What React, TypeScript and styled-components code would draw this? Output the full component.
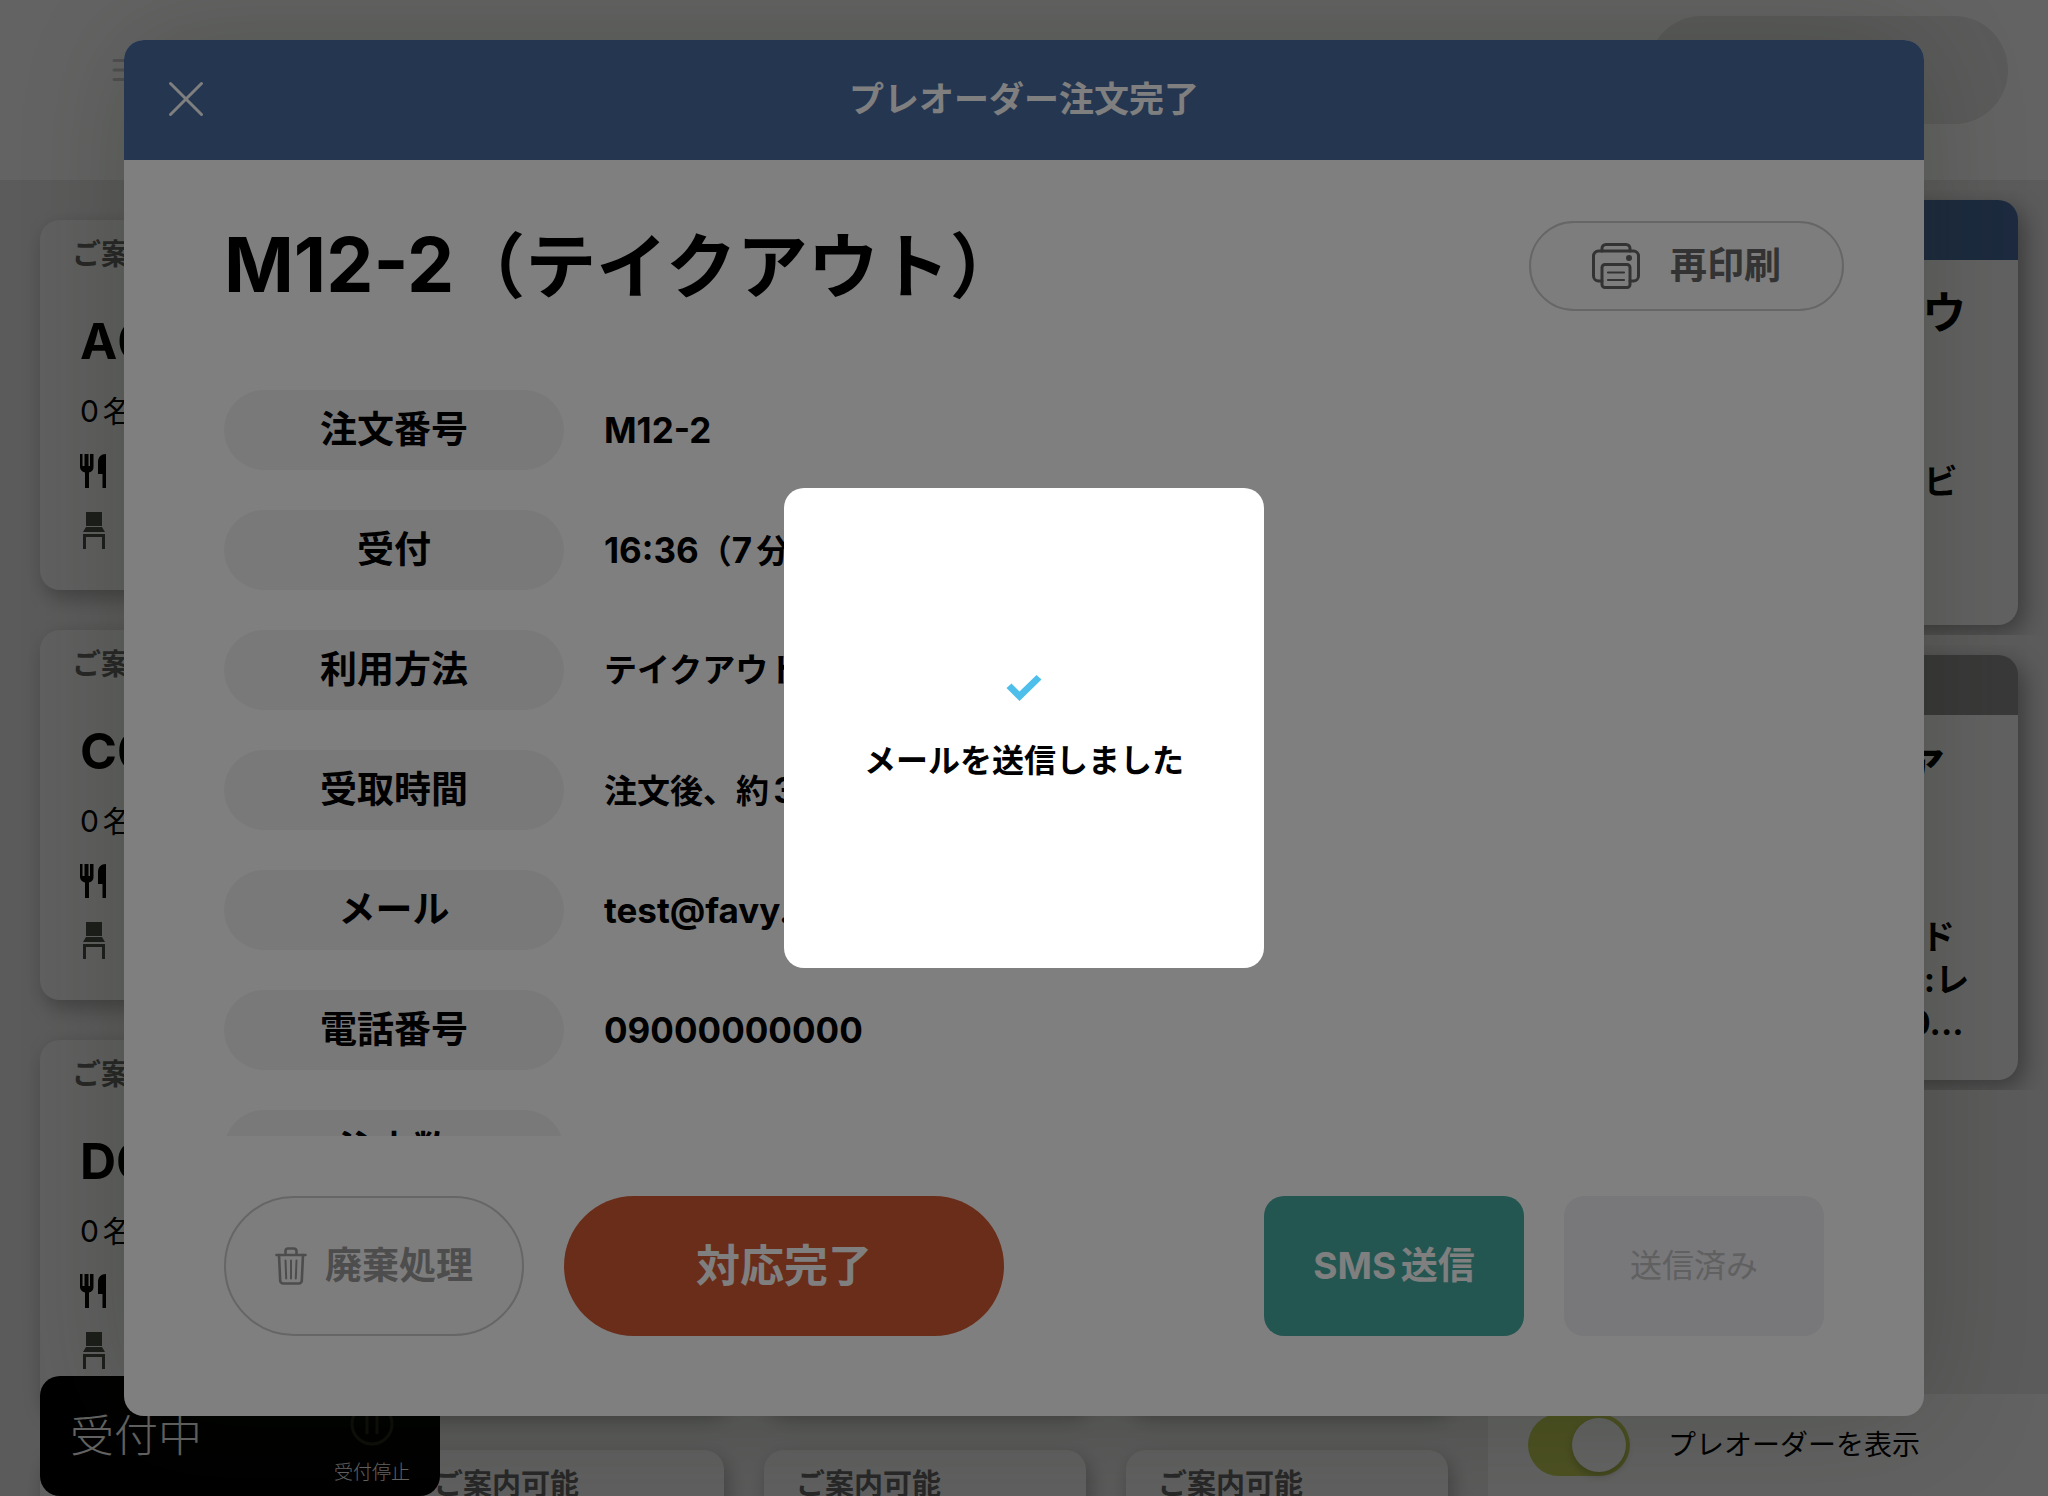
import React from "react";
import styled, { createGlobalStyle } from "styled-components";

const GlobalStyle = createGlobalStyle`
  *, *::before, *::after { box-sizing: border-box; }
  body {
    margin: 0;
    font-family: Inter, "Noto Sans CJK JP", sans-serif;
    line-height: 1.5;
    color: #000;
    text-autospace: normal;
  }
  button { font-family: inherit; line-height: inherit; padding: 0; border: 0; cursor: pointer; text-autospace: normal; }
  h1, h2, h3, p, ul, dl, dd { margin: 0; padding: 0; }
  ul { list-style: none; }
`;

const Screen = styled.div`
  position: relative;
  display: flex;
  flex-direction: column;
  height: 100vh;
  overflow: hidden;
  background: #ebebeb;
`;

const TopBar = styled.header`
  display: flex;
  flex: none;
  align-items: flex-start;
  justify-content: space-between;
  height: 180px;
  padding: 16px 40px;
  background: #fff;
`;

const MenuButton = styled.button`
  display: flex;
  align-items: center;
  height: 108px;
  padding-left: 72px;
  background: none;
  color: #ccc;
`;

const SearchPill = styled.button`
  width: 360px;
  height: 108px;
  border-radius: 54px;
  background: #e9e9e9;
`;

const Main = styled.main`
  display: flex;
  flex: 1;
  min-height: 0;
`;

const SeatGrid = styled.ul`
  display: grid;
  flex: 1;
  grid-template-columns: repeat(4, 1fr);
  grid-auto-rows: 370px;
  gap: 40px;
  padding: 40px;
  overflow: hidden;
`;

const SeatCard = styled.li`
  padding: 15px 32px;
  border-radius: 20px;
  background: #f7f7f7;
  box-shadow: 4px 8px 20px rgba(0, 0, 0, 0.28);
`;

const SeatStatus = styled.p`
  color: #666;
  font-size: 29px;
  font-weight: 700;
  line-height: 40px;
`;

const SeatBody = styled.div`
  display: flex;
  flex-direction: column;
  gap: 20px;
  padding: 36px 8px 0;
`;

const SeatName = styled.h3`
  font-size: 50px;
  font-weight: 700;
  line-height: 60px;
`;

const SeatLine = styled.div`
  display: flex;
  align-items: center;
  height: 40px;
  font-size: 30px;
`;

const Sidebar = styled.aside`
  display: flex;
  flex: none;
  flex-direction: column;
  width: 560px;
`;

const OrderList = styled.ul`
  display: flex;
  flex: 1;
  flex-direction: column;
  gap: 10px;
  min-height: 0;
  padding-top: 10px;
`;

const OrderCell = styled.li`
  padding: 10px 30px 10px 40px;
  overflow: hidden;
`;

const OrderCard = styled.article<{ $strip: string }>`
  height: 425px;
  padding: 25px 36px;
  border-top: 60px solid ${(p) => p.$strip};
  border-radius: 20px;
  background: #fbfbfb;
  box-shadow: 6px 8px 24px rgba(0, 0, 0, 0.36);
`;

const OrderName = styled.h3`
  height: 175px;
  padding-left: 4px;
  font-size: 44px;
  font-weight: 700;
  line-height: 56px;
  white-space: nowrap;
`;

const OrderItem = styled.p`
  font-size: 34px;
  font-weight: 700;
  line-height: 43px;
  white-space: nowrap;
`;

const SidebarFooter = styled.label`
  display: flex;
  flex: none;
  align-items: center;
  gap: 38px;
  height: 102px;
  padding: 0 40px;
  background: #fbfbfb;
  font-size: 28px;
`;

const Toggle = styled.input`
  display: flex;
  align-items: center;
  justify-content: flex-end;
  width: 102px;
  height: 62px;
  margin: 0;
  padding: 0 4px;
  border-radius: 31px;
  background: #c6d058;
  appearance: none;

  &::before {
    content: "";
    width: 54px;
    height: 54px;
    border-radius: 27px;
    background: #fff;
    box-shadow: 0 4px 8px rgba(0, 0, 0, 0.2);
  }
`;

const ReceptionBar = styled.section`
  position: absolute;
  bottom: 0;
  left: 40px;
  display: flex;
  align-items: center;
  justify-content: space-between;
  width: 400px;
  height: 120px;
  padding: 0 30px;
  border-radius: 20px;
  background: #000;
  color: #fff;
  font-size: 44px;
  font-weight: 300;
`;

const PauseButton = styled.button`
  display: flex;
  flex-direction: column;
  align-items: center;
  gap: 14px;
  padding-top: 16px;
  background: none;
  color: #fff;
  font-size: 19px;
  font-weight: 300;
  line-height: 26px;
`;

const Layer = styled.div<{ $shade: number }>`
  position: absolute;
  inset: 0;
  display: flex;
  align-items: center;
  justify-content: center;
  padding: 40px 124px 80px;
  background: rgba(0, 0, 0, ${(p) => p.$shade});
`;

const Dialog = styled.section`
  display: flex;
  flex: 1;
  flex-direction: column;
  align-self: stretch;
  overflow: hidden;
  border-radius: 20px;
  background: #fff;
  box-shadow: 0 0 120px rgba(36, 64, 20, 0.22);
`;

const DialogHeader = styled.header`
  display: grid;
  flex: none;
  grid-template-columns: 124px 1fr 124px;
  align-items: center;
  height: 120px;
  padding-bottom: 2px;
  background: #4a6ca2;
  color: #fff;
`;

const CloseButton = styled.button`
  display: flex;
  align-items: center;
  justify-content: center;
  height: 100%;
  background: none;
  color: #fff;
`;

const DialogTitle = styled.h1`
  font-size: 35px;
  font-weight: 600;
  text-align: center;
`;

const OrderHeading = styled.div`
  display: flex;
  flex: none;
  align-items: center;
  justify-content: space-between;
  padding: 61px 80px 79px 100px;
`;

const OrderTitle = styled.h2`
  height: 90px;
  font-size: 71px;
  font-weight: 700;
  line-height: 88px;
`;

const Latin = styled.span<{ $size: number }>`
  font-size: ${(p) => p.$size}px;
`;

const ReprintButton = styled.button`
  display: flex;
  align-items: center;
  justify-content: center;
  gap: 30px;
  width: 315px;
  height: 90px;
  border: 2px solid #ccc;
  border-radius: 45px;
  background: #fafafa;
  color: #666;
  font-size: 37px;
  font-weight: 600;
`;

const Details = styled.dl`
  display: flex;
  flex: 1;
  flex-direction: column;
  gap: 40px;
  min-height: 0;
  padding: 0 100px;
  overflow-y: auto;
  scrollbar-width: none;
`;

const DetailRow = styled.div`
  display: flex;
  flex: none;
  align-items: center;
  gap: 40px;
`;

const DetailLabel = styled.dt`
  width: 340px;
  border-radius: 40px;
  background: #f2f2f2;
  font-size: 37px;
  font-weight: 600;
  line-height: 80px;
  text-align: center;
`;

const DetailValue = styled.dd`
  font-size: 33px;
  font-weight: 700;
  line-height: 80px;
  height: 80px;
`;

const Actions = styled.footer`
  display: flex;
  flex: none;
  gap: 40px;
  padding: 60px 100px 80px;
`;

const PillButton = styled.button<{ $primary?: boolean }>`
  display: flex;
  align-items: center;
  justify-content: center;
  gap: 18px;
  width: ${(p) => (p.$primary ? "440px" : "300px")};
  height: 140px;
  border: ${(p) => (p.$primary ? "0" : "2px solid #ccc")};
  border-radius: 70px;
  background: ${(p) => (p.$primary ? "#d45a34" : "#fafafa")};
  color: ${(p) => (p.$primary ? "#fff" : "#9a9a9a")};
  font-size: ${(p) => (p.$primary ? "44px" : "37px")};
  font-weight: 600;
`;

const SendGroup = styled.div`
  display: flex;
  gap: 40px;
  margin-left: auto;
`;

const SendButton = styled.button`
  width: 260px;
  height: 140px;
  border-radius: 20px;
  background: #48aca2;
  color: #fff;
  font-size: 37px;
  font-weight: 700;

  &:disabled {
    background: #f0f0f4;
    color: #c0c0c2;
    font-size: 32px;
    font-weight: 400;
  }
`;

const Notice = styled.div`
  display: flex;
  flex-direction: column;
  align-items: center;
  justify-content: center;
  gap: 36px;
  width: 480px;
  height: 480px;
  padding-top: 4px;
  border-radius: 20px;
  background: #fff;
  font-size: 32px;
  font-weight: 600;
  line-height: 48px;
`;

const MenuIcon = () => (
  <svg width="36" height="24" viewBox="0 0 36 24" fill="none" stroke="currentColor" strokeWidth="3" strokeLinecap="round">
    <path d="M2 2.5H34M2 12H34M2 21.5H34" />
  </svg>
);

const CutleryIcon = () => (
  <svg width="26" height="34" viewBox="0 0 26 34" fill="#000">
    <path d="M0 0H2.500V12H4.500V0H8.500V12H10V0H13.500V13C13.500 16 12 17.500 9 18.500V34H5V18.500C2 17.500 0 16 0 13Z" />
    <path d="M26 0V34H22.500V20H18V8C18 3 21 0 26 0Z" />
  </svg>
);

const ChairIcon = () => (
  <svg width="26" height="38" viewBox="0 0 26 38" fill="#484c46">
    <path d="M6 0H22V14H6ZM6 15H22L25 20H3ZM3 22H25V37H22V25H6V37H3Z" />
  </svg>
);

const PauseIcon = () => (
  <svg width="44" height="44" viewBox="0 0 44 44" fill="none" stroke="#24221a" strokeWidth="3">
    <circle cx="22" cy="22" r="20" />
    <path d="M17 12V32M27 12V32" />
  </svg>
);

const CloseIcon = () => (
  <svg width="36" height="36" viewBox="0 0 36 36" fill="none" stroke="currentColor" strokeWidth="3" strokeLinecap="round">
    <path d="M2.500 2.500L33.500 33.500M33.500 2.500L2.500 33.500" />
  </svg>
);

const PrinterIcon = () => (
  <svg width="48" height="46" viewBox="0 0 48 46" fill="none" stroke="currentColor" strokeWidth="3" strokeLinecap="round" strokeLinejoin="round">
    <path d="M10 8V5.500A4 4 0 0 1 14 1.500H34A4 4 0 0 1 38 5.500V8" />
    <path d="M10 38H6.500A5 5 0 0 1 1.500 33V13A5 5 0 0 1 6.500 8H41.500A5 5 0 0 1 46.500 13V33A5 5 0 0 1 41.500 38H38" />
    <rect x="10" y="21.500" width="28" height="23" rx="3" />
    <path d="M16 29.500H32M16 37H32" strokeWidth="2.200" />
    <circle cx="37" cy="15" r="1.500" fill="currentColor" />
  </svg>
);

const TrashIcon = () => (
  <svg width="32" height="38" viewBox="0 0 32 38" fill="none" stroke="currentColor" strokeWidth="2.600" strokeLinecap="round" strokeLinejoin="round">
    <path d="M1.500 8H30.500M10.500 8V4A2.500 2.500 0 0 1 13 1.500H19A2.500 2.500 0 0 1 21.500 4V8" />
    <path d="M4 8L5.200 33.500A3 3 0 0 0 8.200 36.500H23.800A3 3 0 0 0 26.800 33.500L28 8" />
    <path d="M10.500 13.500L11.200 31.500M16 13.500V31.500M21.500 13.500L20.800 31.500" strokeWidth="2" />
  </svg>
);

const CheckIcon = () => (
  <svg width="36" height="26" viewBox="0 0 36 26" fill="#4dbfea">
    <path d="M0.500 13L5.500 8.500L13.500 16.500L30.500 0L35.500 4.500L13.500 26Z" />
  </svg>
);

/* Latin runs are set slightly larger than the kana and kanji beside them. */
const Mixed = ({ text, size }: { text: string; size: number }) => (
  <>
    {text.split(/([\x21-\x7e]+)/).map((run, i) =>
      i % 2 ? <Latin key={i} $size={size}>{run}</Latin> : run
    )}
  </>
);

const seats = [
  { name: "A01" }, {}, {}, {},
  { name: "C01" }, {}, {}, {},
  { name: "D01" }, {}, {}, {},
  { status: "" }, { status: "ご案内可能" }, { status: "ご案内可能" }, { status: "ご案内可能" },
] as { name?: string; status?: string }[];

const orders = [
  { name: "M12-2（テイクアウ", strip: "#4a6ca2", items: ["1 × ソフトドリンクサービ"] },
  { name: "M12-10（フードア", strip: "#929292", items: ["1× アイスコーヒー サイド", "1× ドリンクセット 飲料:レ", "1×トッピング 100 1500..."] },
];

const details = [
  ["注文番号", "M12-2"],
  ["受付", "16:36（7分前）"],
  ["利用方法", "テイクアウト"],
  ["受取時間", "注文後、約30分"],
  ["メール", "test@favy.jp"],
  ["電話番号", "09000000000"],
  ["注文数", ""],
];

export default function App() {
  return (
    <Screen>
      <GlobalStyle />
      <TopBar>
        <MenuButton aria-label="メニュー"><MenuIcon /></MenuButton>
        <SearchPill aria-label="検索" />
      </TopBar>
      <Main>
        <SeatGrid>
          {seats.map((seat, i) => (
            <SeatCard key={i}>
              {seat.name ? (
                <>
                  <SeatStatus>ご案内可能</SeatStatus>
                  <SeatBody>
                    <SeatName>{seat.name}</SeatName>
                    <SeatLine>0名</SeatLine>
                    <SeatLine><CutleryIcon /></SeatLine>
                    <SeatLine><ChairIcon /></SeatLine>
                  </SeatBody>
                </>
              ) : (
                <SeatStatus>{seat.status}</SeatStatus>
              )}
            </SeatCard>
          ))}
        </SeatGrid>
        <Sidebar>
          <OrderList>
            {orders.map((order) => (
              <OrderCell key={order.name}>
                <OrderCard $strip={order.strip}>
                  <OrderName>{order.name}</OrderName>
                  {order.items.map((item) => <OrderItem key={item}>{item}</OrderItem>)}
                </OrderCard>
              </OrderCell>
            ))}
          </OrderList>
          <SidebarFooter>
            <Toggle type="checkbox" role="switch" defaultChecked />
            プレオーダーを表示
          </SidebarFooter>
        </Sidebar>
      </Main>
      <ReceptionBar>
        受付中
        <PauseButton><PauseIcon />受付停止</PauseButton>
      </ReceptionBar>

      <Layer $shade={0.22}>
        <Dialog role="dialog" aria-labelledby="dialog-title">
          <DialogHeader>
            <CloseButton aria-label="閉じる"><CloseIcon /></CloseButton>
            <DialogTitle id="dialog-title">プレオーダー注文完了</DialogTitle>
          </DialogHeader>
          <OrderHeading>
            <OrderTitle><Mixed text="M12-2（テイクアウト）" size={75} /></OrderTitle>
            <ReprintButton><PrinterIcon />再印刷</ReprintButton>
          </OrderHeading>
          <Details>
            {details.map(([label, value]) => (
              <DetailRow key={label}>
                <DetailLabel>{label}</DetailLabel>
                <DetailValue><Mixed text={value} size={35} /></DetailValue>
              </DetailRow>
            ))}
          </Details>
          <Actions>
            <PillButton><TrashIcon />廃棄処理</PillButton>
            <PillButton $primary>対応完了</PillButton>
            <SendGroup>
              <SendButton>SMS送信</SendButton>
              <SendButton disabled>送信済み</SendButton>
            </SendGroup>
          </Actions>
        </Dialog>
      </Layer>

      <Layer $shade={0.5}>
        <Notice role="status">
          <CheckIcon />
          <p>メールを送信しました</p>
        </Notice>
      </Layer>
    </Screen>
  );
}
